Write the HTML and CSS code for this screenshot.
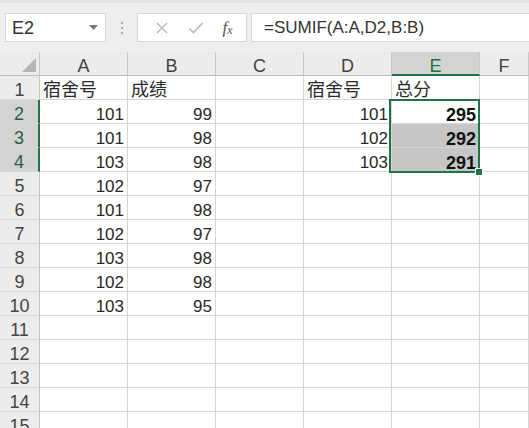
FILE: index.html
```html
<!DOCTYPE html>
<html lang="zh-cn">
  <head>
    <meta charset="utf-8">
    <title>SUMIF</title>
    <link rel="stylesheet" href="styles.css">
  </head>
  <body>
    <div class="toolbar">
      <div class="namebox">
        <span>E2</span>
        <svg class="drop" width="9" height="5" viewBox="0 0 9 5"><path d="M0 0h9L4.5 5z" fill="#777"/></svg>
      </div>
      <div class="grip"><i></i><i></i><i></i></div>
      <div class="fbuttons">
        <svg width="14" height="14" viewBox="0 0 14 14"><path d="M2 2l10 10M12 2L2 12" stroke="#b8b8b8" stroke-width="1.4" fill="none"/></svg>
        <svg width="16" height="14" viewBox="0 0 16 14"><path d="M1.5 7.5l4 4L14.5 2" stroke="#b8b8b8" stroke-width="1.6" fill="none"/></svg>
        <span class="fx">f<sub>x</sub></span>
      </div>
      <div class="formula">=SUMIF(A:A,D2,B:B)</div>
    </div>

    <div class="sheet">
      <div class="row head">
        <div class="rh corner"></div>
        <div class="c">A</div><div class="c">B</div><div class="c">C</div><div class="c">D</div><div class="c sel">E</div><div class="c last">F</div>
      </div>
      <div class="row">
        <div class="rh">1</div>
        <div class="c t">宿舍号</div><div class="c t">成绩</div><div class="c"></div><div class="c t">宿舍号</div><div class="c t">总分</div><div class="c last"></div>
      </div>
      <div class="row">
        <div class="rh sel">2</div>
        <div class="c n">101</div><div class="c n">99</div><div class="c"></div><div class="c n">101</div><div class="c n b">295</div><div class="c last"></div>
      </div>
      <div class="row">
        <div class="rh sel">3</div>
        <div class="c n">101</div><div class="c n">98</div><div class="c"></div><div class="c n">102</div><div class="c n b hl">292</div><div class="c last"></div>
      </div>
      <div class="row">
        <div class="rh sel">4</div>
        <div class="c n">103</div><div class="c n">98</div><div class="c"></div><div class="c n">103</div><div class="c n b hl">291</div><div class="c last"></div>
      </div>
      <div class="row">
        <div class="rh">5</div>
        <div class="c n">102</div><div class="c n">97</div><div class="c"></div><div class="c"></div><div class="c"></div><div class="c last"></div>
      </div>
      <div class="row">
        <div class="rh">6</div>
        <div class="c n">101</div><div class="c n">98</div><div class="c"></div><div class="c"></div><div class="c"></div><div class="c last"></div>
      </div>
      <div class="row">
        <div class="rh">7</div>
        <div class="c n">102</div><div class="c n">97</div><div class="c"></div><div class="c"></div><div class="c"></div><div class="c last"></div>
      </div>
      <div class="row">
        <div class="rh">8</div>
        <div class="c n">103</div><div class="c n">98</div><div class="c"></div><div class="c"></div><div class="c"></div><div class="c last"></div>
      </div>
      <div class="row">
        <div class="rh">9</div>
        <div class="c n">102</div><div class="c n">98</div><div class="c"></div><div class="c"></div><div class="c"></div><div class="c last"></div>
      </div>
      <div class="row">
        <div class="rh">10</div>
        <div class="c n">103</div><div class="c n">95</div><div class="c"></div><div class="c"></div><div class="c"></div><div class="c last"></div>
      </div>
      <div class="row">
        <div class="rh">11</div>
        <div class="c"></div><div class="c"></div><div class="c"></div><div class="c"></div><div class="c"></div><div class="c last"></div>
      </div>
      <div class="row">
        <div class="rh">12</div>
        <div class="c"></div><div class="c"></div><div class="c"></div><div class="c"></div><div class="c"></div><div class="c last"></div>
      </div>
      <div class="row">
        <div class="rh">13</div>
        <div class="c"></div><div class="c"></div><div class="c"></div><div class="c"></div><div class="c"></div><div class="c last"></div>
      </div>
      <div class="row">
        <div class="rh">14</div>
        <div class="c"></div><div class="c"></div><div class="c"></div><div class="c"></div><div class="c"></div><div class="c last"></div>
      </div>
      <div class="row">
        <div class="rh">15</div>
        <div class="c"></div><div class="c"></div><div class="c"></div><div class="c"></div><div class="c"></div><div class="c last"></div>
      </div>

      <!-- selected range E2:E4 -->
      <div class="selection"><span class="handle"></span></div>
    </div>
  </body>
</html>
```

FILE: styles.css
```css
body {
    margin: 0;
    overflow: hidden;
    background: #fff;
    font-family: "Liberation Sans", "Noto Sans CJK SC", sans-serif;
    color: #222;
}

/* formula bar */
.toolbar {
    display: flex;
    align-items: stretch;
    box-sizing: border-box;
    height: 52px;
    padding: 10px 0 10px 5px;
    background: #eeeeee;
    border-top: 3px solid #e2e2e2;
}
.namebox {
    display: flex;
    align-items: center;
    justify-content: space-between;
    box-sizing: border-box;
    width: 101px;
    padding: 2px 7px 0 6px;
    background: #fff;
    border: 1px solid #d6d6d6;
    font-size: 18px;
    color: #333;
}
.namebox .drop {
    margin-top: -2px;
}
.grip {
    display: flex;
    flex-direction: column;
    justify-content: center;
    gap: 3px;
    width: 31px;
    align-items: center;
}
.grip i {
    display: block;
    width: 2px;
    height: 2px;
    background: #a8a8a8;
}
.fbuttons {
    display: flex;
    align-items: center;
    justify-content: space-around;
    box-sizing: border-box;
    width: 110px;
    padding: 0 4px 0 8px;
    background: #fff;
    border: 1px solid #d6d6d6;
}
.fx {
    font-family: "Liberation Serif", serif;
    font-style: italic;
    font-size: 17px;
    color: #555;
}
.fx sub {
    font-size: 12px;
    vertical-align: -1px;
}
.formula {
    flex: 1;
    margin-left: 4px;
    padding: 4px 0 0 12px;
    background: #fff;
    border: 1px solid #d6d6d6;
    border-right: none;
    font-size: 17px;
    color: #333;
}

/* grid */
.sheet {
    position: relative;
}
.row {
    display: flex;
    height: 24px;
}
.rh, .c {
    box-sizing: border-box;
    height: 24px;
    flex: none;
    font-size: 17px;
    line-height: 20px;
    padding-top: 4px;
    white-space: nowrap;
}
.rh {
    width: 40px;
    background: #ececec;
    border-right: 1px solid #c4c4c4;
    border-bottom: 1px solid #d8d8d8;
    text-align: center;
    font-size: 18px;
    color: #444;
}
.rh.sel {
    background: #d3d3d3;
    color: #2b5f41;
    border-right: 2px solid #217346;
}
.c {
    width: 88px;
    border-right: 1px solid #d6d6d6;
    border-bottom: 1px solid #d6d6d6;
    padding-left: 3px;
    padding-right: 3px;
    padding-top: 5px;
    color: #2a2a2a;
}
.c.last {
    flex: 1;
}
.c.t {
    font-family: "Noto Sans CJK SC", sans-serif;
    font-size: 18px;
    padding-top: 2px;
}
.c.n {
    text-align: right;
}
.c.b {
    font-weight: bold;
    font-size: 18px;
    color: #111;
}
.c.hl {
    background: #c6c6c6;
}

.head .c, .head .rh {
    background: #ececec;
    border-right: 1px solid #c8c8c8;
    border-bottom: 1px solid #bdbdbd;
    text-align: center;
    font-size: 18px;
    color: #444;
    padding-top: 4px;
}
.head .c.sel {
    background: #d3d3d3;
    color: #217346;
    border-bottom: 2px solid #217346;
}
.corner {
    position: relative;
}
.corner:after {
    content: "";
    position: absolute;
    right: 3px;
    bottom: 3px;
    border-left: 14px solid transparent;
    border-bottom: 14px solid #b5b5b5;
}

.selection {
    position: absolute;
    left: 389px;
    top: 47px;
    width: 91px;
    height: 74px;
    box-sizing: border-box;
    border: 2px solid #217346;
}
.handle {
    position: absolute;
    right: -5px;
    bottom: -5px;
    width: 6px;
    height: 6px;
    background: #217346;
    border: 1px solid #fff;
}
```
